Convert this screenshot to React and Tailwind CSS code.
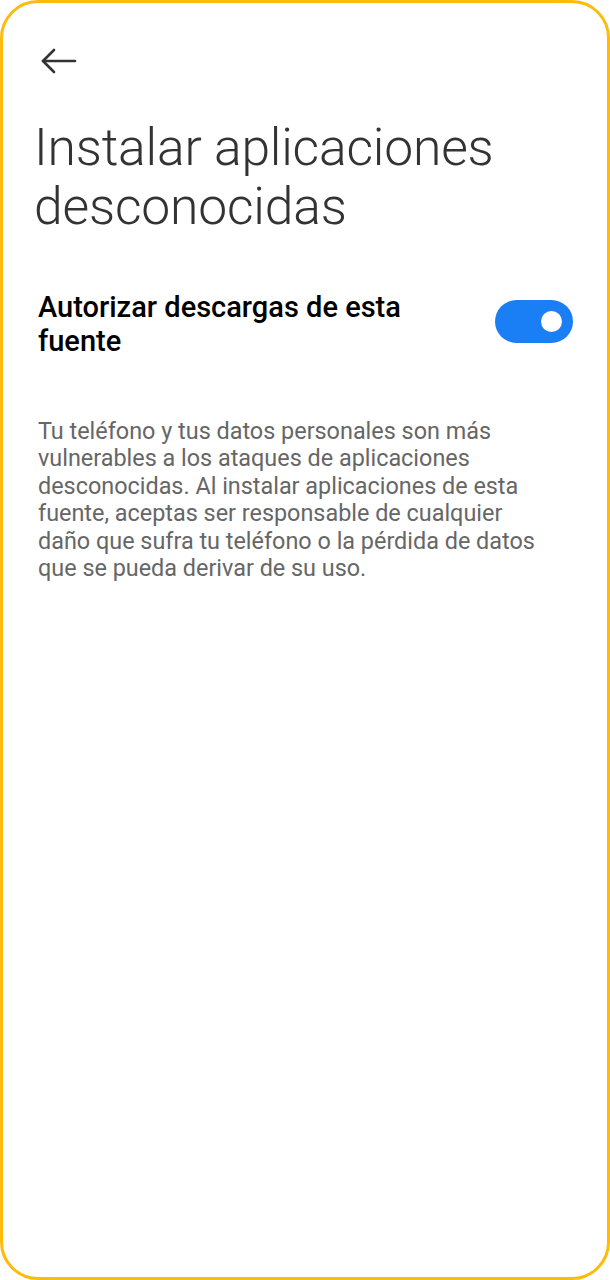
export default function App() {
  return (
    <div className="w-[610px] h-[1280px] bg-white" style={{ fontFamily: "Roboto, 'Noto Sans', sans-serif" }}>
      <div className="w-full h-full border-[3px] border-[#FDBB0B] rounded-[38px] bg-white flex flex-col">
        <div className="pt-[43px] pl-[37px]">
          <svg width="38" height="30" viewBox="0 0 38 30" fill="none" stroke="#333" strokeWidth="2.6" strokeLinecap="round" strokeLinejoin="round">
            <path d="M3 15 H35" />
            <path d="M14 4 L3 15 L14 26" />
          </svg>
        </div>
        <h1 className="mt-[42px] pl-[31px] text-[51.6px] leading-[59px] font-light text-[#333] tracking-[-0.2px]">
          Instalar aplicaciones desconocidas
        </h1>
        <div className="mt-[54px] pl-[35px] pr-[34px] flex items-center justify-between">
          <div className="text-[29px] leading-[34px] font-medium text-black w-[420px]">
            Autorizar descargas de esta fuente
          </div>
          <div className="w-[78px] h-[43px] mb-[6px] rounded-full bg-[#1A7FF5] flex items-center justify-end pr-[11px]">
            <div className="w-[21px] h-[21px] rounded-full bg-white" />
          </div>
        </div>
        <p className="mt-[60px] pl-[35px] w-[555px] text-[23.4px] leading-[27.4px] text-[#666]">
          Tu teléfono y tus datos personales son más vulnerables a los ataques de aplicaciones desconocidas. Al instalar aplicaciones de esta fuente, aceptas ser responsable de cualquier daño que sufra tu teléfono o la pérdida de datos que se pueda derivar de su uso.
        </p>
      </div>
    </div>
  );
}
